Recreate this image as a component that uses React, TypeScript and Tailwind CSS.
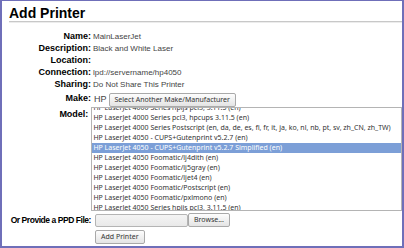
import React from "react";

const details = [
  { label: "Name:", value: "MainLaserJet" },
  { label: "Description:", value: "Black and White Laser" },
  { label: "Location:", value: "" },
  { label: "Connection:", value: "lpd://servername/hp4050" },
  { label: "Sharing:", value: "Do Not Share This Printer" },
];

const models = [
  "HP LaserJet 4000 Series hpijs pcl3, 3.11.5 (en)",
  "HP LaserJet 4000 Series pcl3, hpcups 3.11.5 (en)",
  "HP LaserJet 4000 Series Postscript (en, da, de, es, fi, fr, it, ja, ko, nl, nb, pt, sv, zh_CN, zh_TW)",
  "HP LaserJet 4050 - CUPS+Gutenprint v5.2.7 (en)",
  "HP LaserJet 4050 - CUPS+Gutenprint v5.2.7 Simplified (en)",
  "HP LaserJet 4050 Foomatic/lj4dith (en)",
  "HP LaserJet 4050 Foomatic/lj5gray (en)",
  "HP LaserJet 4050 Foomatic/ljet4 (en)",
  "HP LaserJet 4050 Foomatic/Postscript (en)",
  "HP LaserJet 4050 Foomatic/pxlmono (en)",
  "HP LaserJet 4050 Series hpijs pcl3, 3.11.5 (en)",
];

const selectedModel = 4;

const labelFont = { fontFamily: '"Liberation Sans", Arial, sans-serif' };
const uiFont = { fontFamily: '"Noto Sans", "DejaVu Sans", sans-serif' };

const buttonClass =
  "h-[14px] px-[5px] border border-[#a9a9a9] rounded-[2px] bg-gradient-to-b from-[#fdfdfd] to-[#e4e4e4] text-[7px] leading-[12px] text-[#333] whitespace-nowrap";

export default function App() {
  return (
    <div
      className="w-[404px] h-[248px] overflow-hidden bg-white border-t border-l-2 border-r-2 border-b-2 border-[#6f6fb9] flex flex-col"
      style={labelFont}
    >
      <h1 className="ml-[7px] mt-[4px] text-[14px] leading-[16px] font-bold text-black">
        Add Printer
      </h1>
      <div className="ml-[7px] h-[2px] border-t border-[#c8c8c8] bg-[#ececec]" />

      <div className="mt-[8px] flex flex-col">
        {details.map((row) => (
          <div key={row.label} className="flex h-[12px] items-center">
            <span className="w-[89px] text-right text-[9px] font-bold text-black whitespace-nowrap">
              {row.label}
            </span>
            <span className="ml-[2px] text-[8px] text-[#444]">{row.value}</span>
          </div>
        ))}

        <div className="flex h-[15px] items-center mt-[1px]">
          <span className="w-[89px] text-right text-[9px] font-bold text-black self-start">
            Make:
          </span>
          <span className="ml-[3px] text-[9px] text-[#444]">HP</span>
          <button
            className={`ml-[2px] ${buttonClass} text-[6.6px] px-[4px]`}
            style={uiFont}
          >
            Select Another Make/Manufacturer
          </button>
        </div>

        <div className="flex">
          <span className="w-[89px] text-right text-[9px] font-bold text-black mt-[1px] leading-[12px]">
            Model:
          </span>
          <div className="ml-[3px] w-[320px] h-[104px] border border-[#b4b4b4] overflow-hidden bg-white">
            <div className="mt-[-5px]" style={uiFont}>
              {models.map((m, i) => (
                <div
                  key={m}
                  className={`h-[10px] leading-[10px] pl-[1px] text-[7px] whitespace-nowrap ${
                    i === selectedModel ? "bg-[#7c9fd7] text-white" : "text-[#333]"
                  }`}
                >
                  {m}
                </div>
              ))}
            </div>
          </div>
        </div>

        <div className="flex items-center mt-[2px]">
          <span className="w-[89px] flex justify-end text-[8.5px] tracking-[-0.45px] font-bold text-black whitespace-nowrap">
            Or Provide a PPD File:
          </span>
          <div className="ml-[4px] w-[93px] h-[13px] border border-[#b4b4b4] rounded-[2px] bg-gradient-to-b from-[#f4f4f4] to-[#e9e9e9]" />
          <button className={`${buttonClass} h-[13px]`} style={uiFont}>
            Browse...
          </button>
        </div>

        <div className="flex mt-[3px]">
          <div className="w-[93px]" />
          <button className={buttonClass} style={uiFont}>
            Add Printer
          </button>
        </div>
      </div>
    </div>
  );
}
